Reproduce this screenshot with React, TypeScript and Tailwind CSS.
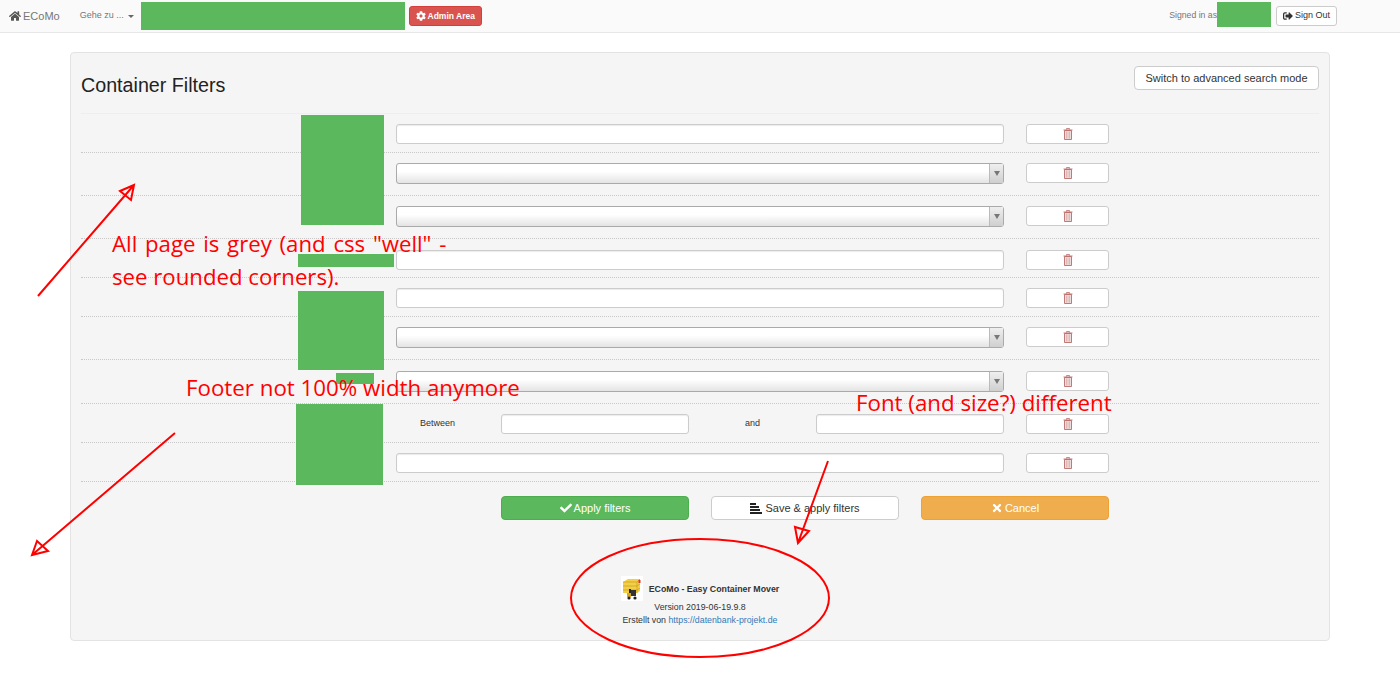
import { FaCheck, FaCog, FaHome, FaSignOutAlt, FaTimes } from "react-icons/fa";

// Zeilen des Filterformulars: Höhe und Feldart
const ROWS = [
  { kind: "input", height: "h-[39px]", pad: "pt-[10px]" },
  { kind: "select", height: "h-[43px]", pad: "pt-[10px]" },
  { kind: "select", height: "h-[43px]", pad: "pt-[10px]" },
  { kind: "input", height: "h-[39px]", pad: "pt-[11px]" },
  { kind: "input", height: "h-[39px]", pad: "pt-[10px]" },
  { kind: "select", height: "h-[43px]", pad: "pt-[10px]" },
  { kind: "select", height: "h-[44px]", pad: "pt-[11px]" },
  { kind: "between", height: "h-[39px]", pad: "pt-[10px]" },
  { kind: "input", height: "h-[39px]", pad: "pt-[10px]" },
];

function TextField({ className = "" }: { className?: string }) {
  return <div className={`h-[20px] rounded-[3px] border border-[#ccc] bg-white shadow-[inset_0_1px_1px_rgba(0,0,0,0.08)] ${className}`} />;
}

function SelectField() {
  return (
    <div className="flex h-[21px] w-full rounded-[3px] border border-[#aaa] bg-gradient-to-b from-white from-40% to-[#e4e4e4]">
      <div className="flex-1" />
      <div className="flex w-[14px] items-center justify-center border-l border-[#bbb] bg-gradient-to-b from-[#efefef] to-[#cfcfcf]">
        <div className="h-0 w-0 border-x-[3px] border-t-[5px] border-x-transparent border-t-[#777]" />
      </div>
    </div>
  );
}

function TrashIcon() {
  return (
    <svg width="10" height="12" viewBox="0 0 10 12" fill="none" stroke="#b25a58" strokeWidth="0.8">
      <path d="M3.5 1.5 V0.6 H6.5 V1.5" />
      <path d="M0.5 2 H9.5" />
      <path d="M1.5 2.5 H8.5 V11.5 H1.5 Z" fill="#eedddc" />
      <path d="M3.8 3.5 V10.5 M6.2 3.5 V10.5" strokeOpacity="0.5" />
    </svg>
  );
}

function StackIcon() {
  return (
    <svg width="12" height="11" viewBox="0 0 12 11" fill="#222">
      <rect x="0" y="0" width="6" height="2" />
      <rect x="0" y="3" width="9" height="2" />
      <rect x="0" y="6" width="10" height="2" />
      <rect x="0" y="9" width="12" height="2" />
    </svg>
  );
}

function FilterRow({ kind, height, pad }: { kind: string; height: string; pad: string }) {
  return (
    <div className={`flex border-b border-dotted border-[#c8c8c8] pl-[315px] ${height} ${pad}`}>
      <div className="w-[608px]">
        {kind === "input" && <TextField />}
        {kind === "select" && <SelectField />}
        {kind === "between" && (
          <div className="grid grid-cols-[105px_188px_127px_188px] items-center text-[9px] text-[#333]">
            <span className="pl-[24px]">Between</span>
            <TextField />
            <span className="text-center">and</span>
            <TextField />
          </div>
        )}
      </div>
      <button className="ml-[22px] flex h-[20px] w-[83px] justify-center rounded-[3px] border border-[#ccc] bg-white pt-[3px]">
        <TrashIcon />
      </button>
    </div>
  );
}

function Logo() {
  return (
    <svg width="22" height="25" viewBox="0 0 22 25" className="bg-white">
      <path d="M2 6 L7 3 H19 V15 L16 17 H2 Z" fill="#f2cf45" />
      <path d="M2 6 H16 V17 M16 6 L19 3" fill="none" stroke="#c99c1c" strokeWidth="0.7" />
      <path d="M2 10 H16 M2 14 H16 M16 10 L19 8 M16 14 L19 12" stroke="#c99c1c" strokeWidth="0.7" />
      <rect x="17.5" y="4" width="2" height="3" fill="#d9342b" />
      <rect x="8" y="13" width="2" height="8" fill="#222" />
      <rect x="10" y="14" width="5" height="6" fill="#333" />
      <rect x="6" y="17" width="4" height="4" fill="#d9a520" />
      <circle cx="8" cy="22" r="1.6" fill="#222" />
      <circle cx="14" cy="22" r="1.6" fill="#222" />
    </svg>
  );
}

export default function App() {
  return (
    <div className="relative h-[686px] overflow-hidden bg-white font-['Liberation_Sans',Arial,sans-serif]">
      <nav className="flex h-[33px] items-center border-b border-[#e7e7e7] bg-[#fafafa] pl-[9px] text-[#777]">
        <FaHome className="text-[12px] text-[#555]" />
        <span className="ml-[2px] text-[11px]">ECoMo</span>
        <span className="ml-[20px] text-[9px]">Gehe zu ...</span>
        <div className="ml-[4px] h-0 w-0 border-x-[3px] border-t-[3px] border-x-transparent border-t-[#666]" />
        <div className="w-[275px]" />
        <button className="flex h-[20px] w-[73px] items-center justify-center gap-[2px] rounded-[3px] border border-[#d43f3a] bg-[#d9534f] text-[8.5px] font-bold text-white">
          <FaCog className="text-[10px]" /> Admin Area
        </button>
        <span className="ml-auto text-[8.7px]">Signed in as</span>
        <div className="w-[59px]" />
        <button className="mr-[63px] flex h-[20px] w-[61px] items-center justify-center gap-[2px] rounded-[3px] border border-[#ccc] bg-white text-[9px] text-[#333]">
          <FaSignOutAlt className="text-[10px]" /> Sign Out
        </button>
      </nav>

      <main className="mx-[70px] mt-[19px] h-[589px] rounded-[4px] border border-[#e3e3e3] bg-[#f5f5f5] px-[10px]">
        <div className="flex h-[61px] items-start justify-between border-b border-[#eee]">
          <h1 className="mt-[20px] text-[19.7px] leading-[24px] text-[#222]">Container Filters</h1>
          <button className="mt-[13px] h-[24px] w-[185px] rounded-[4px] border border-[#ccc] bg-white text-[11px] text-[#333]">
            Switch to advanced search mode
          </button>
        </div>

        {ROWS.map((row, i) => (
          <FilterRow key={i} {...row} />
        ))}

        <div className="mt-[14px] flex gap-[22px] pl-[420px] text-[11px]">
          <button className="flex h-[24px] w-[188px] items-center justify-center gap-[2px] rounded-[4px] border border-[#4cae4c] bg-[#5cb85c] text-white">
            <FaCheck className="text-[12px]" /> Apply filters
          </button>
          <button className="flex h-[24px] w-[188px] items-center justify-center gap-[3px] rounded-[4px] border border-[#ccc] bg-white text-[#333]">
            <StackIcon /> Save &amp; apply filters
          </button>
          <button className="flex h-[24px] w-[188px] items-center justify-center gap-[2px] rounded-[4px] border border-[#eea236] bg-[#f0ad4e] text-white">
            <FaTimes className="text-[12px]" /> Cancel
          </button>
        </div>

        <footer className="mt-[56px] flex flex-col items-center text-[8.8px] text-[#333]">
          <div className="flex items-center gap-[6px] font-bold">
            <Logo />
            <span className="pt-[2px]">ECoMo - Easy Container Mover</span>
          </div>
          <div className="leading-[13px]">Version 2019-06-19.9.8</div>
          <div className="leading-[13px]">
            Erstellt von <span className="text-[#337ab7]">https://datenbank-projekt.de</span>
          </div>
        </footer>
      </main>

      {/* Schwärzungen aus dem Original-Screenshot */}
      <div className="absolute left-[141px] top-[2px] h-[28px] w-[264px] bg-[#5cb85c]" />
      <div className="absolute left-[1217px] top-[2px] h-[25px] w-[54px] bg-[#5cb85c]" />
      <div className="absolute left-[301px] top-[115px] h-[110px] w-[83px] bg-[#5cb85c]" />
      <div className="absolute left-[298px] top-[254px] h-[13px] w-[96px] bg-[#5cb85c]" />
      <div className="absolute left-[298px] top-[291px] h-[79px] w-[86px] bg-[#5cb85c]" />
      <div className="absolute left-[336px] top-[373px] h-[11px] w-[38px] bg-[#5cb85c]" />
      <div className="absolute left-[296px] top-[404px] h-[81px] w-[87px] bg-[#5cb85c]" />

      {/* Rote Anmerkungen */}
      <div className="pointer-events-none absolute left-[112px] top-[227px] font-['Open_Sans',sans-serif] text-[22.2px] leading-[33px] text-[#f00]">
        <span className="[word-spacing:2px]">All page is grey (and css "well" -</span>
        <br />
        see rounded corners).
      </div>
      <div className="pointer-events-none absolute left-[186px] top-[371px] font-['Open_Sans',sans-serif] text-[22.3px] leading-[33px] text-[#f00]">
        Footer not 100% width anymore
      </div>
      <div className="pointer-events-none absolute left-[856px] top-[386px] font-['Open_Sans',sans-serif] text-[22.3px] leading-[33px] text-[#f00]">
        Font (and size?) different
      </div>
      <svg className="pointer-events-none absolute left-0 top-0" width="1400" height="686" fill="none" stroke="#f00" strokeWidth="2">
        <path d="M38 296 L134 185 M120 191 L134 185 L131 200 Z" />
        <path d="M175 433 L32 555 M37 541 L32 555 L48 551 Z" />
        <path d="M828 461 L798 543 M795 527 L798 543 L809 531 Z" />
        <ellipse cx="700" cy="598" rx="129" ry="59" />
      </svg>
    </div>
  );
}
